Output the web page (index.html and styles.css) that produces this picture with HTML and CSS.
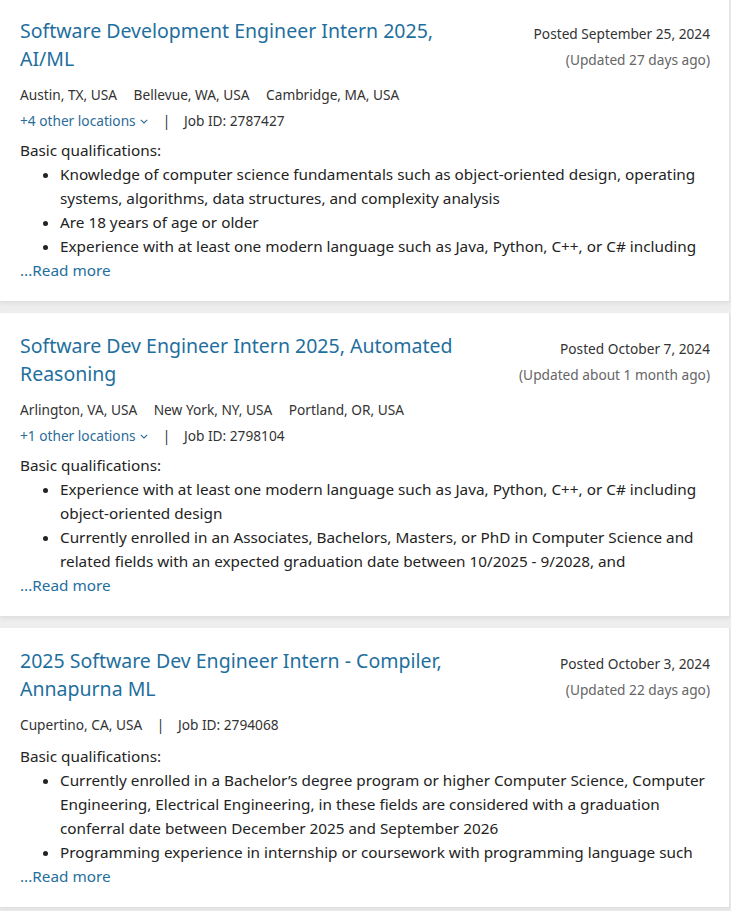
FILE: index.html
```html
<!doctype html>
<html>
<head>
<meta charset="utf-8">
<title>Jobs</title>
<link rel="stylesheet" href="styles.css">
</head>
<body>
<div class="job-list">

    <div class="job-tile">
        <div class="job-head">
            <h3 class="job-title"><a href="#">Software Development Engineer Intern 2025, AI/ML</a></h3>
            <div class="job-dates">
                <div class="posted">Posted September 25, 2024</div>
                <div class="updated">(Updated 27 days ago)</div>
            </div>
        </div>
        <div class="meta-row locations">
            <span class="location">Austin, TX, USA</span>
            <span class="location">Bellevue, WA, USA</span>
            <span class="location">Cambridge, MA, USA</span>
        </div>
        <div class="meta-row job-row">
            <a href="#" class="more-locations">+4 other locations
                <svg class="chevron" width="8" height="5" viewBox="0 0 8 5"><polyline points="0.8,0.8 4,4 7.2,0.8" fill="none" stroke="currentColor" stroke-width="1.1"/></svg></a>
            <span class="sep">|</span>
            <span class="job-id">Job ID: 2787427</span>
        </div>
        <div class="qualifications">
            <p class="qual-head">Basic qualifications:</p>
            <ul>
                <li>Knowledge of computer science fundamentals such as object-oriented design, operating systems, algorithms, data structures, and complexity analysis</li>
                <li>Are 18 years of age or older</li>
                <li>Experience with at least one modern language such as Java, Python, C++, or C# including</li>
            </ul>
        </div>
        <a href="#" class="read-more">...Read more</a>
    </div>

    <div class="job-tile">
        <div class="job-head">
            <h3 class="job-title"><a href="#">Software Dev Engineer Intern 2025, Automated Reasoning</a></h3>
            <div class="job-dates">
                <div class="posted">Posted October 7, 2024</div>
                <div class="updated">(Updated about 1 month ago)</div>
            </div>
        </div>
        <div class="meta-row locations">
            <span class="location">Arlington, VA, USA</span>
            <span class="location">New York, NY, USA</span>
            <span class="location">Portland, OR, USA</span>
        </div>
        <div class="meta-row job-row">
            <a href="#" class="more-locations">+1 other locations
                <svg class="chevron" width="8" height="5" viewBox="0 0 8 5"><polyline points="0.8,0.8 4,4 7.2,0.8" fill="none" stroke="currentColor" stroke-width="1.1"/></svg></a>
            <span class="sep">|</span>
            <span class="job-id">Job ID: 2798104</span>
        </div>
        <div class="qualifications">
            <p class="qual-head">Basic qualifications:</p>
            <ul>
                <li>Experience with at least one modern language such as Java, Python, C++, or C# including object-oriented design</li>
                <li>Currently enrolled in an Associates, Bachelors, Masters, or PhD in Computer Science and related fields with an expected graduation date between 10/2025 - 9/2028, and</li>
            </ul>
        </div>
        <a href="#" class="read-more">...Read more</a>
    </div>

    <div class="job-tile">
        <div class="job-head">
            <h3 class="job-title"><a href="#">2025 Software Dev Engineer Intern - Compiler, Annapurna ML</a></h3>
            <div class="job-dates">
                <div class="posted">Posted October 3, 2024</div>
                <div class="updated">(Updated 22 days ago)</div>
            </div>
        </div>
        <div class="meta-row job-row">
            <span class="location">Cupertino, CA, USA</span>
            <span class="sep">|</span>
            <span class="job-id">Job ID: 2794068</span>
        </div>
        <div class="qualifications">
            <p class="qual-head">Basic qualifications:</p>
            <ul>
                <li>Currently enrolled in a Bachelor’s degree program or higher Computer Science, Computer Engineering, Electrical Engineering, in these fields are considered with a graduation conferral date between December 2025 and September 2026</li>
                <li>Programming experience in internship or coursework with programming language such</li>
            </ul>
        </div>
        <a href="#" class="read-more">...Read more</a>
    </div>

</div>
</body>
</html>
```
FILE: styles.css
```css
body {
    margin: 0;
    background-color: #eeeeee;
    font-family: "Noto Sans", "Open Sans", sans-serif;
    font-size: 15.3px;
    color: #232323;
}

a {
    color: #1f6f9e;
    text-decoration: none;
}

.job-list {
    margin-top: -2px;
}

.job-tile {
    width: 730px;
    background-color: #ffffff;
    border-right: 1px solid #e2e2e2;
    border-bottom: 1px solid #e0e0e0;
    box-shadow: 0 2px 4px rgba(0, 0, 0, 0.06);
    margin-bottom: 11px;
    padding: 19px 20px 19px 20px;
    box-sizing: border-box;
}

.job-head {
    display: flex;
    justify-content: space-between;
    align-items: flex-start;
}

.job-title {
    margin: 0;
    width: 460px;
    font-size: 19.5px;
    font-weight: normal;
    line-height: 28px;
}

.job-dates {
    text-align: right;
    font-size: 13.7px;
    line-height: 26px;
    padding-top: 4px;
    white-space: nowrap;
    margin-right: -1px;
}

.posted {
    color: #333333;
}

.updated {
    color: #666666;
}

.meta-row {
    font-size: 13.7px;
    line-height: 26px;
    color: #333333;
}

.locations {
    margin-top: 9px;
}

.location {
    margin-right: 13px;
}

.job-row .location {
    margin-right: 0;
}

.job-head + .job-row {
    margin-top: 9px;
}

.more-locations {
    color: #2c6b98;
}

.chevron {
    vertical-align: 2px;
    margin-left: 1px;
}

.sep {
    margin: 0 10px 0 11px;
}

.qualifications {
    margin-top: 4px;
    line-height: 24px;
}

/* single meta row: a bit more room above */
.job-head + .job-row + .qualifications {
    margin-top: 6px;
}

.qual-head {
    margin: 0;
}

.qualifications ul {
    margin: 0;
    padding-left: 40px;
}

.read-more {
    display: block;
    line-height: 24px;
}
```
